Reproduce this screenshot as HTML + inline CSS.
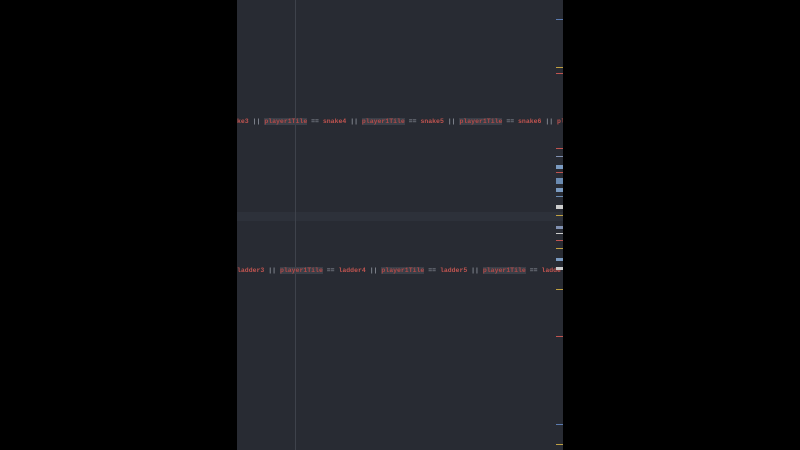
<!DOCTYPE html>
<html><head><style>
body{margin:0;background:#000;width:800px;height:450px;overflow:hidden;position:relative}
#ed{position:absolute;left:237px;top:0;width:326px;height:450px;background:#282b33;overflow:hidden}
.band{position:absolute;left:0;width:326px;top:212px;height:9px;background:#2d313a}
.vl{position:absolute;left:58px;top:0;width:1px;height:450px;background:#3e424b}
.ln{position:absolute;left:0;white-space:pre;font:bold 6.5px "Liberation Mono",monospace;color:#c05450;line-height:9px}
.h{background:#3a3f48;color:#b24a48}
.o{color:#8a8f99}
#sb{position:absolute;left:555px;top:0;width:8px;height:450px}
#sb i{position:absolute;left:1px;width:7px;height:1px;display:block}
</style></head><body>
<div id="ed">
<div class="band"></div>
<div class="vl"></div>
<div class="ln" style="top:117px">ke3 <span class="o">||</span> <span class="h">player1Tile</span> <span class="o">==</span> snake4 <span class="o">||</span> <span class="h">player1Tile</span> <span class="o">==</span> snake5 <span class="o">||</span> <span class="h">player1Tile</span> <span class="o">==</span> snake6 <span class="o">||</span> pl</div>
<div class="ln" style="top:266px">ladder3 <span class="o">||</span> <span class="h">player1Tile</span> <span class="o">==</span> ladder4 <span class="o">||</span> <span class="h">player1Tile</span> <span class="o">==</span> ladder5 <span class="o">||</span> <span class="h">player1Tile</span> <span class="o">==</span> ladde</div>
</div>
<div id="sb">
<i style="top:19px;background:#5a7ab0"></i>
<i style="top:67px;background:#c0a040"></i>
<i style="top:73px;background:#c05450"></i>
<i style="top:148px;background:#c05450"></i>
<i style="top:156px;background:#8090b0"></i>
<i style="top:165px;background:#7a9ac0;height:4px"></i>
<i style="top:172px;background:#c05450"></i>
<i style="top:178px;background:#6a8ab0;height:6px"></i>
<i style="top:188px;background:#7a9ac0;height:4px"></i>
<i style="top:196px;background:#6a8ab0"></i>
<i style="top:205px;background:#ccc;height:4px"></i>
<i style="top:215px;background:#c0a040"></i>
<i style="top:226px;background:#8090b0;height:3px"></i>
<i style="top:233px;background:#ccc"></i>
<i style="top:240px;background:#c05450"></i>
<i style="top:248px;background:#c0a040"></i>
<i style="top:258px;background:#7a9ac0;height:3px"></i>
<i style="top:267px;background:#ccc;height:3px"></i>
<i style="top:289px;background:#c0a040"></i>
<i style="top:336px;background:#c05450"></i>
<i style="top:424px;background:#5a7ab0"></i>
<i style="top:444px;background:#c0a040"></i>
</div>
</body></html>
